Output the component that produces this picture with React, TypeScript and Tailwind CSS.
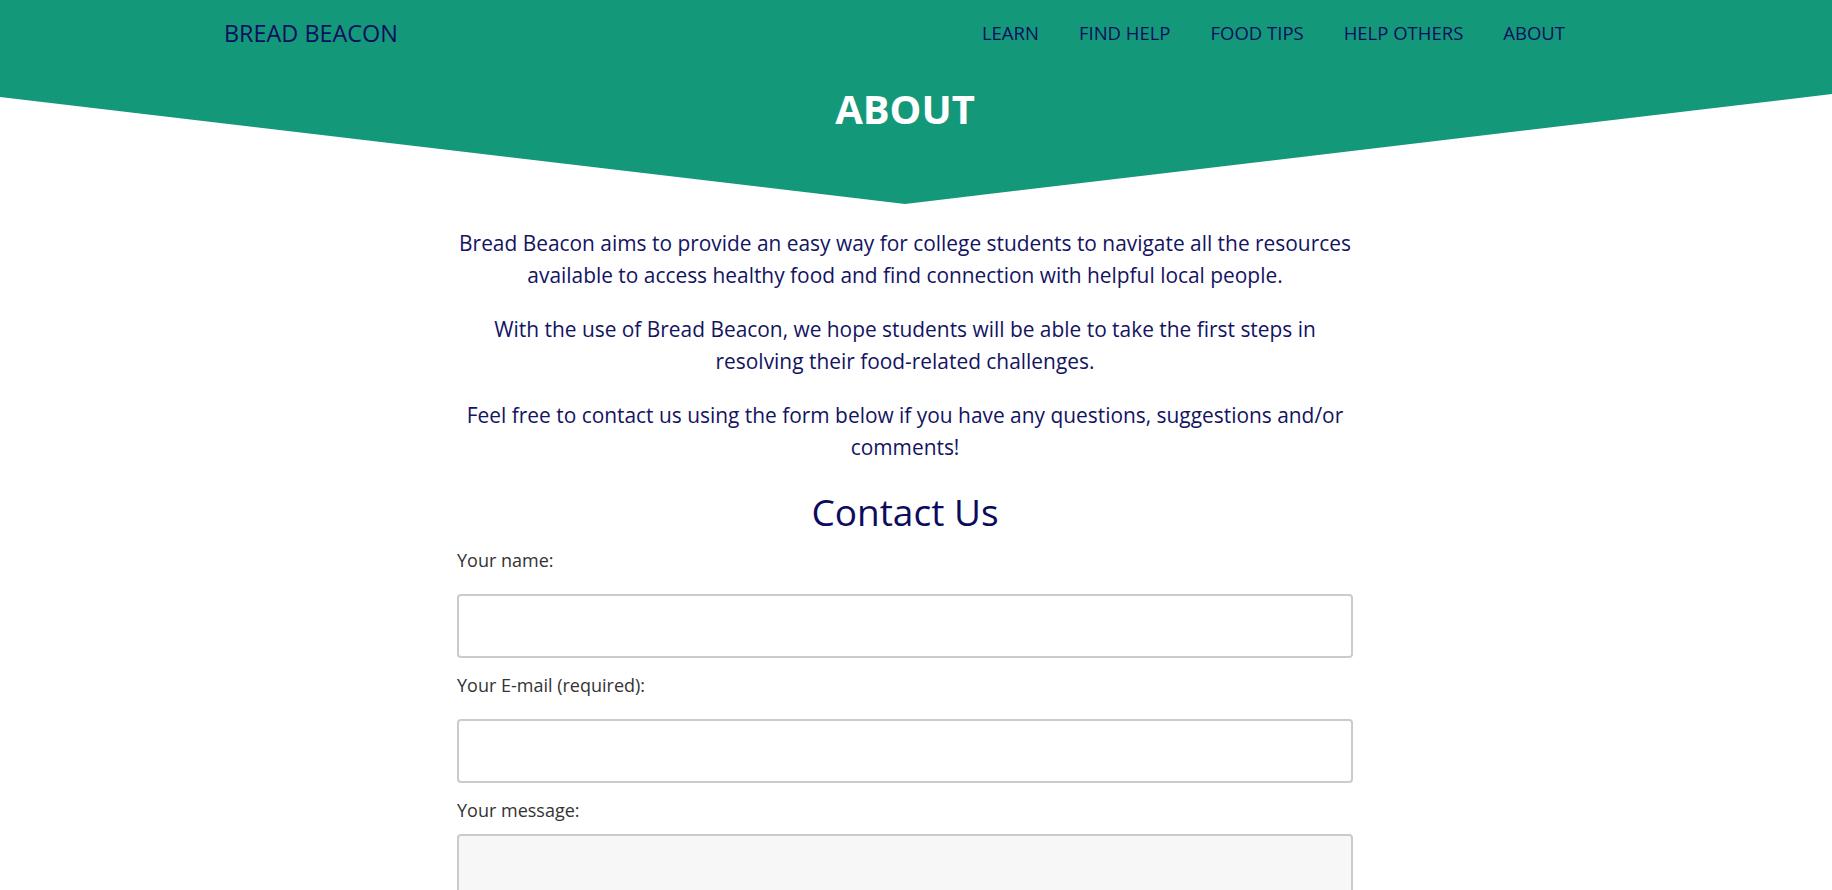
export default function App() {
  const navItems = ["LEARN", "FIND HELP", "FOOD TIPS", "HELP OTHERS", "ABOUT"];
  return (
    <div className="w-[1832px] min-h-screen bg-white font-['Open_Sans',sans-serif]">
      <header className="h-[204px] bg-[#13987a] [clip-path:polygon(0_0,100%_0,100%_94px,905px_100%,0_97px)]">
        <nav className="flex items-center justify-between pl-[224px] pr-[267px] pt-[16px] h-[49px]">
          <a className="text-[23.4px] leading-[30px] text-[#0e0e5e]">BREAD BEACON</a>
          <ul className="flex items-center gap-[40px]">
            {navItems.map((n) => (
              <li key={n} className="text-[18.5px] leading-[30px] text-[#0e0e5e]">
                {n}
              </li>
            ))}
          </ul>
        </nav>
        <div className="pr-[22px] pt-[36px]">
          <h1 className="text-center text-[40px] leading-[48px] font-bold text-white">ABOUT</h1>
        </div>
      </header>
      <main className="pr-[22px]">
        <div className="mx-auto w-[896px] pt-[23px]">
          <div className="-mx-[4px] flex flex-col gap-[22px] text-center text-[20.9px] leading-[32px] text-[#14145f]">
            <p>
              Bread Beacon aims to provide an easy way for college students to navigate all the resources
              available to access healthy food and find connection with helpful local people.
            </p>
            <p>
              With the use of Bread Beacon, we hope students will be able to take the first steps in
              resolving their food-related challenges.
            </p>
            <p>
              Feel free to contact us using the form below if you have any questions, suggestions and/or
              comments!
            </p>
          </div>
          <h2 className="mt-[25px] text-center text-[37px] leading-[48px] text-[#0c0c5e]">Contact Us</h2>
          <form className="mt-[12px] flex flex-col text-[18px] leading-[24px] text-[#333]">
            <label className="block">Your name:</label>
            <input type="text" className="mt-[22px] block h-[64px] w-full rounded-[4px] border-2 border-[#cbcbcb] bg-white outline-none" />
            <label className="mt-[15px] block">Your E-mail (required):</label>
            <input type="email" className="mt-[22px] block h-[64px] w-full rounded-[4px] border-2 border-[#cbcbcb] bg-white outline-none" />
            <label className="mt-[15px] block">Your message:</label>
            <textarea className="mt-[12px] block h-[200px] w-full resize-none rounded-[4px] border-2 border-[#cbcbcb] bg-[#f7f7f7] outline-none" />
          </form>
          <div className="h-[40px]" />
        </div>
      </main>
    </div>
  );
}
